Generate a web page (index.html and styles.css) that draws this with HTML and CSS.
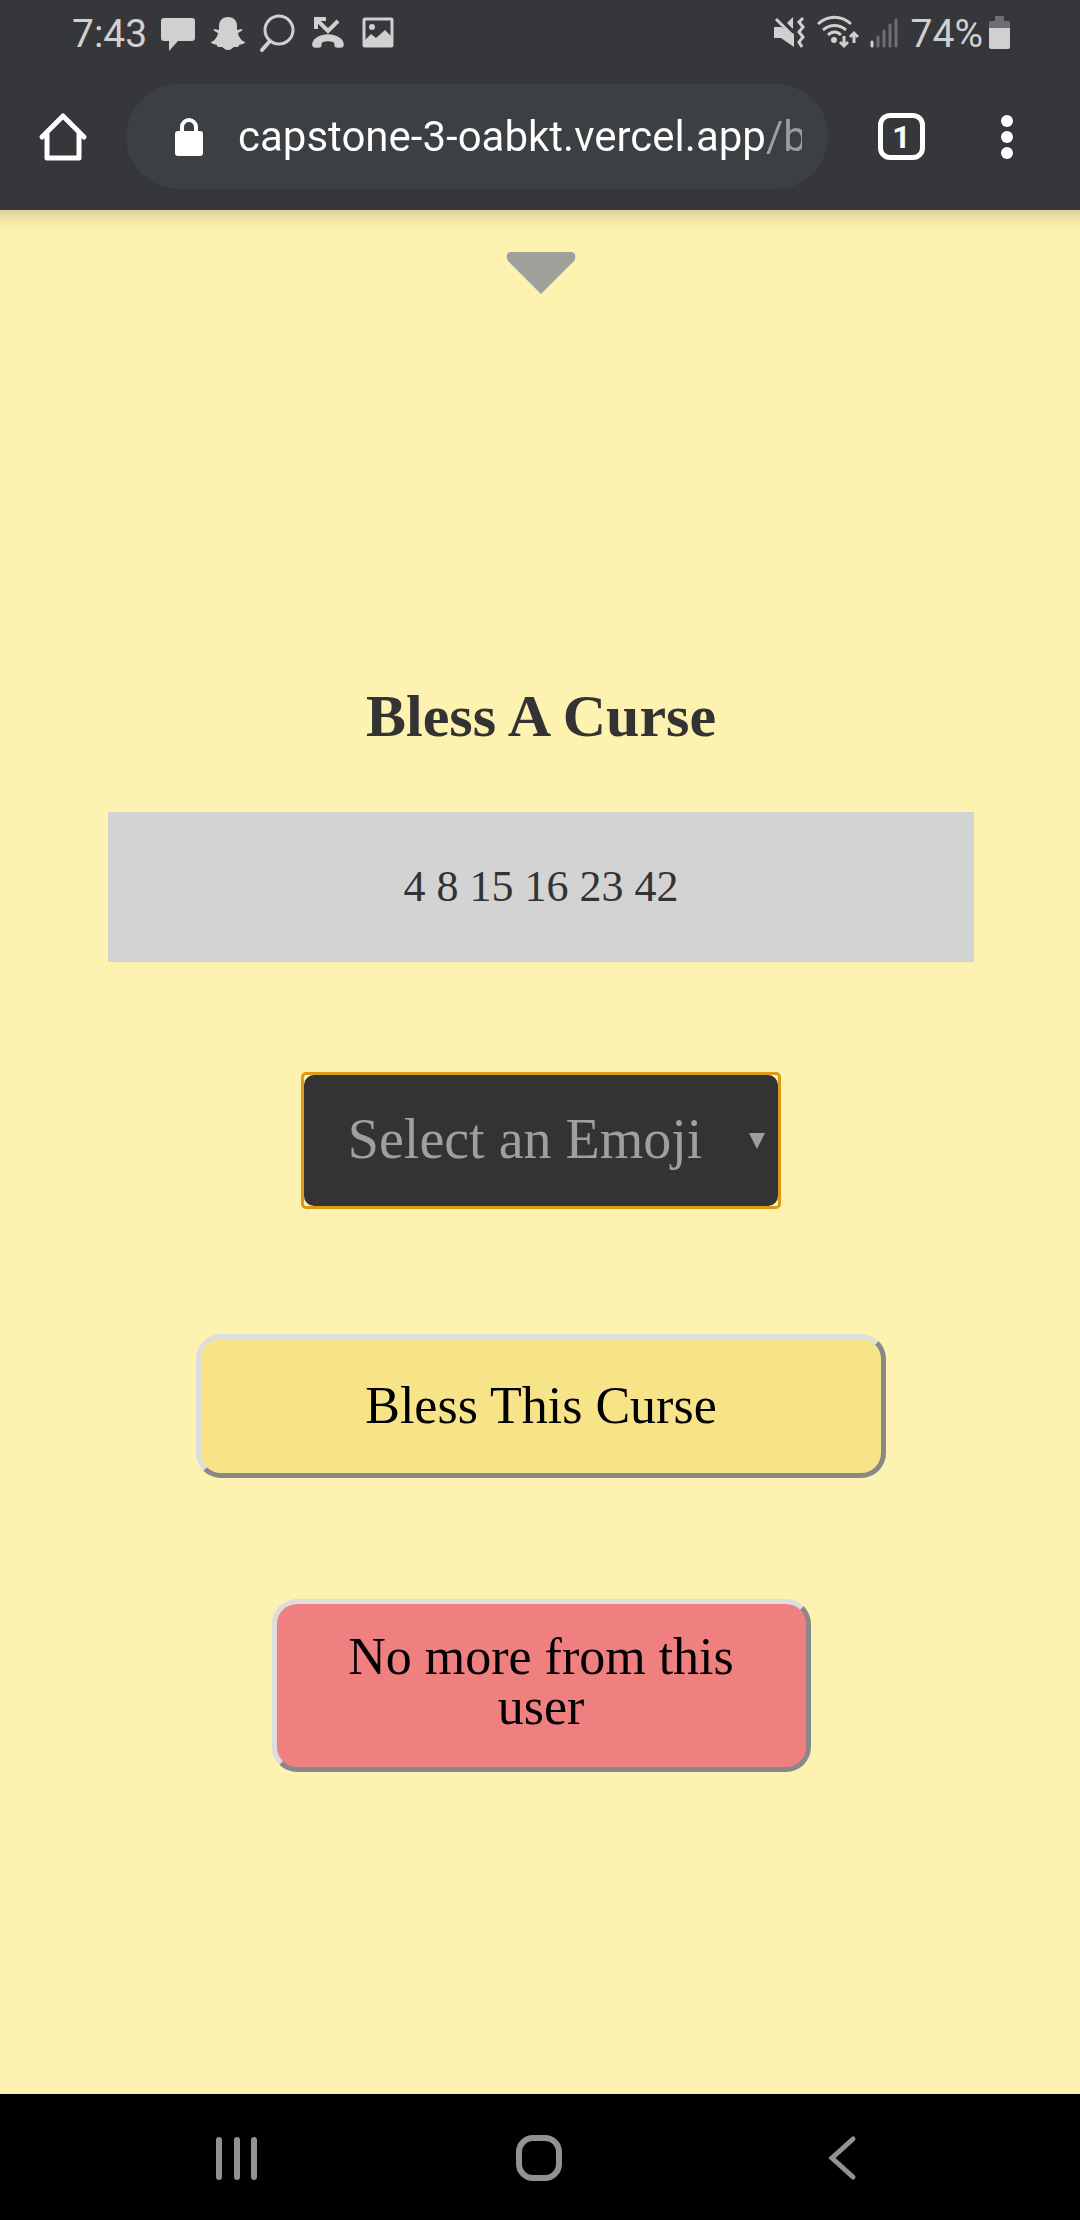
FILE: index.html
```html
<!DOCTYPE html>
<html lang="en">
<head>
<meta charset="utf-8">
<meta name="viewport" content="width=device-width, initial-scale=1">
<title>Bless A Curse</title>
<link rel="stylesheet" href="styles.css">
</head>
<body class="screen">
<header class="browser">
  <div class="status">
    <div class="status-left">
      <span>7:43</span>
      <svg width="38" height="40" viewBox="0 0 38 40" fill="currentColor"><path d="M5 4h28a3 3 0 0 1 3 3v17a3 3 0 0 1-3 3H19L10 37V27H5a3 3 0 0 1-3-3V7a3 3 0 0 1 3-3z"/></svg>
      <svg width="38" height="40" viewBox="0 0 38 40" fill="currentColor"><path d="M19 3c6 0 9 4 9 9v4l5-1c1 1 0 2-4 4 1 5 4 8 7 9 0 2-4 2-6 3 0 2-1 2-5 2-2 1-3 3-6 3s-4-2-6-3c-4 0-5 0-5-2-2-1-6-1-6-3 3-1 6-4 7-9-4-2-5-3-4-4l5 1v-4c0-5 3-9 9-9z"/></svg>
      <svg width="38" height="40" viewBox="0 0 38 40" fill="none" stroke="currentColor" stroke-width="3"><circle cx="20" cy="16" r="14"/><path d="M11 27L3 36" stroke-width="4" stroke-linecap="round"/></svg>
      <svg width="38" height="40" viewBox="0 0 38 40" fill="currentColor"><path d="M7 15V5h10M7 5l12 12L29 7" fill="none" stroke="currentColor" stroke-width="4"/><path d="M4 33c-2-3 0-7 3-9 7-5 17-5 24 0 3 2 5 6 3 9-1 1-7 1-8 0-1-2 0-4-2-5-3-1-7-1-10 0-2 1-1 3-2 5-1 1-7 1-8 0z"/></svg>
      <svg width="38" height="40" viewBox="0 0 38 40" fill="currentColor"><rect x="5" y="5" width="28" height="27" rx="1" fill="none" stroke="currentColor" stroke-width="3"/><circle cx="13" cy="13" r="3"/><path d="M6 26l6-6 5 4 9-8 7 7v9H6z"/></svg>
    </div>
    <div class="status-right">
      <svg width="36" height="40" viewBox="0 0 36 40" fill="currentColor"><path d="M3 13h7l13 7v13L10 24H3z"/><path d="M5 5l17 17" stroke="currentColor" stroke-width="3"/><path d="M16 9l6-6v12z"/><path d="M32 4l-4 4 4 5-4 5 4 5-4 5 3 5" fill="none" stroke="currentColor" stroke-width="3"/></svg>
      <svg width="42" height="40" viewBox="0 0 42 40" fill="none" stroke="currentColor" stroke-width="3"><path d="M1 10c10-9 23-9 33 0M6 16c7-6 16-6 23 0M11 21c4-4 9-4 13 0"/><circle cx="17" cy="26" r="3" fill="currentColor" stroke="none"/><path d="M27 22v9M37 29V21"/><path d="M23 28l4 4 4-4M33 23l4-4 4 4"/></svg>
      <svg width="32" height="40" viewBox="0 0 32 40" stroke="#6e6f72" stroke-width="3" stroke-linecap="round"><path d="M3 28v4" stroke="#d0d0d0"/><path d="M9 23v9M15 17v15M21 11v21M27 6v26"/></svg>
      <div class="power">
        <span>74%</span>
        <svg width="22" height="40" viewBox="0 0 22 40"><path d="M6 2h9v5h4a2 2 0 0 1 2 2v6H0V9a2 2 0 0 1 2-2h4z" fill="#6e6f72"/><path d="M0 14h21v19a2 2 0 0 1-2 2H2a2 2 0 0 1-2-2z" fill="#d0d0d0"/></svg>
      </div>
    </div>
  </div>
  <div class="toolbar">
    <button class="icon-button home" type="button" aria-label="Home"><svg width="50" height="50" viewBox="0 0 50 50" fill="none" stroke="#fff" stroke-width="5" stroke-linecap="round" stroke-linejoin="round"><path d="M4 25L25 4l21 21M9 22v24h32V22"/></svg></button>
    <div class="address">
      <svg width="30" height="38" viewBox="0 0 30 38"><path d="M8 14V9a7 7 0 0 1 14 0v5" fill="none" stroke="#fff" stroke-width="4"/><rect x="1" y="13" width="28" height="25" rx="3" fill="#fff"/></svg>
      <input class="url" type="text" aria-label="Address" value="capstone-3-oabkt.vercel.app/b">
    </div>
    <button class="icon-button tabs" type="button" aria-label="Open tabs">1</button>
    <button class="icon-button more" type="button" aria-label="More options"><svg width="12" height="46" viewBox="0 0 12 46" fill="#fff"><circle cx="6" cy="7" r="6"/><circle cx="6" cy="23" r="6"/><circle cx="6" cy="39" r="6"/></svg></button>
  </div>
</header>
<main class="page">
  <button class="icon-button" type="button" aria-label="Open menu"><svg width="70" height="42" viewBox="0 0 70 42" fill="#9f9f9b"><path d="M5 0h60c5 0 5 6 3 9L35 42 2 9C0 6 0 0 5 0z"/></svg></button>
  <h1 class="title">Bless A Curse</h1>
  <p class="curse">4 8 15 16 23 42</p>
  <div class="picker">
    <select class="emoji" aria-label="Emoji"><option>Select an Emoji</option></select>
    <svg class="picker-arrow" width="16" height="16" viewBox="0 0 16 16" fill="#a09f9c"><path d="M0 0h16L8 16z"/></svg>
  </div>
  <button class="action bless" type="button">Bless This Curse</button>
  <button class="action block-user" type="button">No more from this user</button>
</main>
<nav class="system" aria-label="System">
  <button class="icon-button" type="button" aria-label="Recent apps"><svg width="48" height="48" viewBox="0 0 48 48" stroke="#929292" stroke-width="6" stroke-linecap="round"><path d="M6 7v37M24 7v37M41 7v37"/></svg></button>
  <button class="icon-button" type="button" aria-label="Home screen"><svg width="48" height="48" viewBox="0 0 48 48" fill="none" stroke="#929292" stroke-width="6"><rect x="3" y="5" width="40" height="40" rx="14"/></svg></button>
  <button class="icon-button" type="button" aria-label="Back"><svg width="48" height="48" viewBox="0 0 48 48" fill="none" stroke="#929292" stroke-width="5" stroke-linecap="round"><path d="M34 6L13 25l21 19"/></svg></button>
</nav>
</body>
</html>
```

FILE: styles.css
```css
* {
  box-sizing: border-box;
}

.screen {
  margin: 0;
  min-height: 100vh;
  display: flex;
  flex-direction: column;
  background: #fef2b1;
  font-family: "Liberation Serif", serif;
}

.browser {
  background: #36373b;
  padding-bottom: 21px;
  font-family: Roboto, sans-serif;
}

.status {
  display: flex;
  justify-content: space-between;
  height: 68px;
  padding: 0 69px 0 72px;
  color: #d0d0d0;
  font-size: 39px;
}

.status-left,
.status-right,
.power {
  display: flex;
  align-items: center;
}

.status-left {
  gap: 12px;
}

.status-right {
  gap: 10px;
}

.power {
  gap: 6px;
}

.toolbar {
  display: flex;
  align-items: center;
  margin-top: 16px;
  padding: 0 67px 0 38px;
}

.icon-button {
  display: flex;
  align-items: center;
  justify-content: center;
  padding: 0;
  border: 0;
  background: none;
}

.address {
  flex: 1;
  display: flex;
  align-items: center;
  gap: 34px;
  height: 105px;
  margin: 0 50px 0 38px;
  padding: 0 26px 0 48px;
  border-radius: 53px;
  background: #3c4043;
}

.url {
  flex: 1;
  min-width: 0;
  height: 60px;
  padding: 0;
  border: 0;
  outline: 0;
  background: linear-gradient(to right, #fff 528px, #9b9d9f 528px);
  background-clip: text;
  color: transparent;
  font: 42px/60px Roboto, sans-serif;
}

.tabs {
  width: 47px;
  height: 47px;
  border: 5px solid #fff;
  border-radius: 12px;
  color: #fff;
  font: bold 32px/32px Roboto, sans-serif;
}

.more {
  margin-left: 76px;
}

.page {
  flex: 1;
  display: flex;
  flex-direction: column;
  align-items: center;
  padding: 42px 0 60px 2px;
  background: linear-gradient(#ddd09c, #f2e6a9 10px, #fef2b1 22px);
}

.title {
  margin: 392px 0 66px;
  color: #333;
  font-size: 60px;
  line-height: 60px;
}

.curse {
  align-self: stretch;
  margin: 0 106px;
  padding: 50px;
  background: #d3d3d3;
  color: #333;
  font-size: 44px;
  line-height: 50px;
  text-align: center;
}

.picker {
  position: relative;
  width: 44%;
  margin: 113px 0 128px;
  outline: 3px solid #dd9a17;
  border-radius: 2px;
}

.emoji {
  display: block;
  appearance: none;
  width: 100%;
  height: 131px;
  padding: 0 44px 4px;
  border: 0;
  border-radius: 10px;
  outline: 0;
  background: #333;
  color: #a09f9c;
  font: 56px "Liberation Serif", serif;
}

.picker-arrow {
  position: absolute;
  right: 13px;
  top: 58px;
  pointer-events: none;
}

.action {
  border: 5px solid;
  border-color: #ddd #888 #888 #ddd;
  border-radius: 25px;
  color: #000;
  font: 52px/50px "Liberation Serif", serif;
}

.bless {
  width: 64%;
  height: 144px;
  margin-bottom: 121px;
  background: #f7e488;
}

.block-user {
  width: 50%;
  padding: 28px 40px 35px;
  background: #f08080;
}

.system {
  display: grid;
  grid-template-columns: repeat(3, 1fr);
  height: 126px;
  padding: 0 85px;
  background: #000;
}
```
